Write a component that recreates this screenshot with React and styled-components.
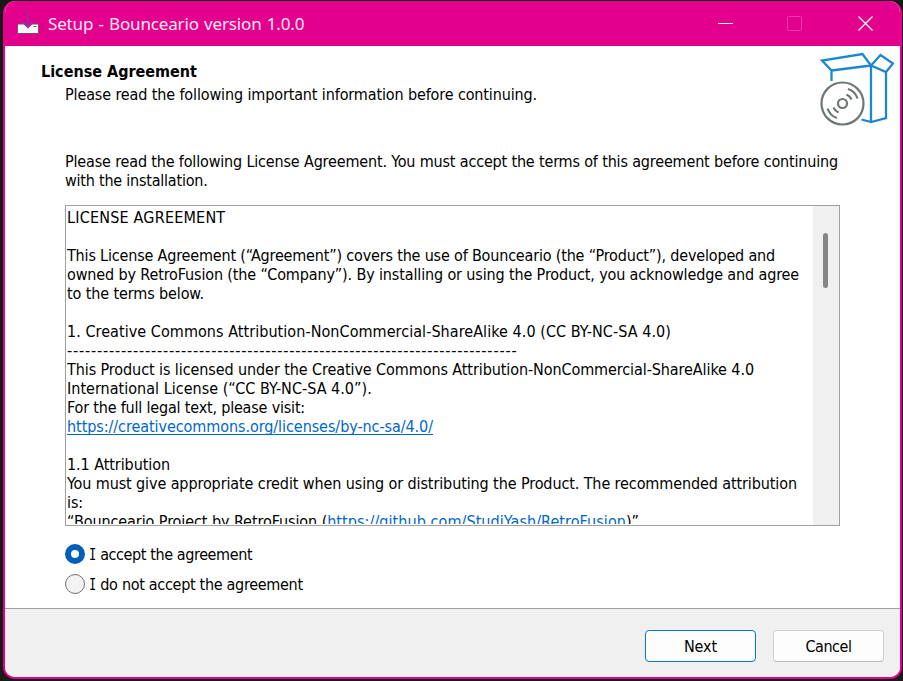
import React from 'react';
import styled, { createGlobalStyle } from 'styled-components';

const GlobalStyle = createGlobalStyle`
  * { box-sizing: border-box; }
  body { margin: 0; background: #191919; overflow: hidden; }
`;

const Desktop = styled.div`
  width: 903px;
  height: 681px;
  padding: 1px 1px 2px 3px;
  background: #191919;
`;

const Window = styled.div`
  height: 678px;
  display: flex;
  flex-direction: column;
  overflow: hidden;
  border: 2px solid #e3008c;
  border-top-width: 0;
  border-radius: 12px;
  background: #fff;
  color: #000;
  font: 16px/19px "DejaVu Sans Condensed", "DejaVu Sans", sans-serif;
`;

const TitleBar = styled.header`
  flex: none;
  height: 45px;
  display: flex;
  align-items: center;
  background: #e3008c;
  color: #fff;
`;

const AppIcon = styled.svg`
  width: 24px;
  height: 25px;
  margin: 0 8px 0 11px;
`;

const Title = styled.h1`
  flex: 1;
  margin: 0;
  font: 400 17px/24px "Noto Sans", "Open Sans", sans-serif;
  letter-spacing: -0.16px;
  word-spacing: 1px;
  color: #ffe9f6;
`;

const WindowControls = styled.div`
  display: flex;
  align-self: stretch;
`;

const ControlButton = styled.button`
  width: 70px;
  padding: 0;
  border: 0;
  background: none;
  display: grid;
  place-items: center;
  color: ${(p) => (p.disabled ? '#ee3aa8' : '#fff')};
`;

const Header = styled.section`
  flex: none;
  height: 104px;
  display: flex;
  justify-content: space-between;
  padding: 16px 6px 0 36px;
`;

const Heading = styled.h2`
  margin: 0 0 4px;
  font-size: 16px;
  line-height: 19px;
  font-weight: 700;
`;

const BoxArt = styled.svg`
  width: 76px;
  height: 76px;
  margin-top: -11px;
`;

const Body = styled.main`
  flex: 1;
  min-height: 0;
  padding: 2px 60px 0 60px;
`;

const Instructions = styled.div`
  height: 53px;
`;

const Line = styled.div`
  height: 19px;
  white-space: pre;
  letter-spacing: ${(p) => p.$track || 0}px;
`;

const Subheading = styled(Line)`
  margin-left: 24px;
`;

const LicenseBox = styled.div`
  height: 321px;
  display: flex;
  border: 1px solid #a0a0a0;
  padding-left: 1px;
  overflow: hidden;
`;

const LicenseText = styled.div`
  flex: 1;
  min-width: 0;
  height: 318px;
  padding-top: 2px;
  overflow: hidden;
`;

const Link = styled.a`
  color: #0066cc;
  text-decoration: underline;
  text-decoration-thickness: 1px;
  text-decoration-skip-ink: none;
  text-underline-offset: 2px;
  letter-spacing: ${(p) => p.$track}px;
`;

const ScrollTrack = styled.div`
  flex: none;
  width: 26px;
  padding: 27px 0 0 10px;
  background: #f0f0f0;
`;

const ScrollThumb = styled.div`
  width: 5px;
  height: 55px;
  border-radius: 2.5px;
  background: #868686;
`;

const RadioGroup = styled.div`
  display: flex;
  flex-direction: column;
  gap: 10px;
  margin-top: 18px;
`;

const RadioRow = styled.label`
  height: 20px;
  display: flex;
  align-items: center;
  gap: 4px;
  white-space: pre;
  letter-spacing: ${(p) => p.$track}px;
`;

const Radio = styled.span`
  width: 20px;
  height: 20px;
  border-radius: 50%;
  border: ${(p) => (p.$checked ? '6px solid #005fb8' : '1px solid #727272')};
  background: ${(p) => (p.$checked ? '#fff' : '#f3f3f3')};
`;

const SerifI = styled.span`
  display: inline-block;
  width: 7px;
  font-family: "DejaVu Sans Mono", monospace;
  transform: scaleX(0.75);
  transform-origin: left;
`;

const Footer = styled.footer`
  flex: none;
  height: 69px;
  display: flex;
  justify-content: flex-end;
  gap: 17px;
  padding: 21px 16px 0 0;
  border-top: 1px solid #a0a0a0;
  background: #f0f0f0;
`;

const Button = styled.button`
  width: 111px;
  height: 32px;
  padding: 0;
  border: 1px solid ${(p) => (p.$primary ? '#0078d4' : '#d0d0d0')};
  border-bottom-color: ${(p) => (p.$primary ? '#0078d4' : '#bababa')};
  border-radius: 4px;
  background: #fdfdfd;
  color: #000;
  font: inherit;
  letter-spacing: ${(p) => p.$track}px;
`;

const license = [
  ['LICENSE AGREEMENT', 0.2],
  [''],
  ['This License Agreement (“Agreement”) covers the use of Bounceario (the “Product”), developed and', -0.177],
  ['owned by RetroFusion (the “Company”). By installing or using the Product, you acknowledge and agree', -0.135],
  ['to the terms below.', -0.11],
  [''],
  ['1. Creative Commons Attribution-NonCommercial-ShareAlike 4.0 (CC BY-NC-SA 4.0)', 0.056],
  ['-'.repeat(75), 0.81],
  ['This Product is licensed under the Creative Commons Attribution-NonCommercial-ShareAlike 4.0', -0.088],
  ['International License (“CC BY-NC-SA 4.0”).', 0.02],
  ['For the full legal text, please visit:', -0.187],
  [<Link $track={-0.066}>https://creativecommons.org/licenses/by-nc-sa/4.0/</Link>],
  [''],
  ['1.1 Attribution', -0.066],
  ['You must give appropriate credit when using or distributing the Product. The recommended attribution', -0.104],
  ['is:', -0.1],
  [<>“Bounceario Project by RetroFusion (<Link $track={0.07}>https://github.com/StudiYash/RetroFusion</Link>)”</>, -0.08],
];

export default function App() {
  return (
    <Desktop>
      <GlobalStyle />
      <Window>
        <TitleBar>
          <AppIcon viewBox="0 0 24 25" fill="none">
            <path d="M1.5 13h21v9.500h-21z" fill="#f8f8f8" stroke="#75506a" />
            <path d="M6.500 12h11l-5.500 5.500z" fill="#e3008c" />
            <path d="M17.500 15.500h3" stroke="#555" />
            <path d="M11.500 1v15" stroke="#76409f" />
            <path d="M6.500 11l5 5 5-5" stroke="#6650a8" strokeWidth="1.200" />
          </AppIcon>
          <Title>Setup - Bounceario version 1.0.0</Title>
          <WindowControls>
            <ControlButton aria-label="Minimize">
              <svg width="16" height="15"><path d="M1 7.500h15" stroke="currentColor" /></svg>
            </ControlButton>
            <ControlButton aria-label="Maximize" disabled>
              <svg width="16" height="15"><rect x=".5" y=".5" width="14" height="14" rx="1" fill="none" stroke="currentColor" /></svg>
            </ControlButton>
            <ControlButton aria-label="Close">
              <svg width="16" height="15"><path d="M1.500 .5l14 14M15.500 .5l-14 14" stroke="currentColor" strokeWidth="1.300" /></svg>
            </ControlButton>
          </WindowControls>
        </TitleBar>
        <Header>
          <div>
            <Heading>License Agreement</Heading>
            <Subheading $track={-0.127}>Please read the following important information before continuing.</Subheading>
          </div>
          <BoxArt viewBox="0 0 76 76" fill="none">
            <g stroke="#1c87d1" strokeWidth="2.300">
              <path d="M13.500 30V19.500L4 9.500l40.500-6.500L53 14.500l-39.500 5" />
              <path d="M53 14.500l9.500-10.500L75 12.500l-7 8.500-15-6.500v56.500l15-4V21M53 71l-9.500-2.500" />
            </g>
            <g stroke="#6f7775" strokeWidth="2.200">
              <circle cx="24.500" cy="52.500" r="21" />
              <circle cx="24.500" cy="52.500" r="4.500" />
              <path d="M28.500 43.500a10 10 0 0 1 5 5M30 38a15 15 0 0 1 9.500 9.500M20.500 61.500a10 10 0 0 1-5-5M19 67a15 15 0 0 1-9.500-9.500" />
            </g>
          </BoxArt>
        </Header>
        <Body>
          <Instructions>
            <Line $track={-0.165}>Please read the following License Agreement. You must accept the terms of this agreement before continuing</Line>
            <Line $track={-0.22}>with the installation.</Line>
          </Instructions>
          <LicenseBox>
            <LicenseText>
              {license.map(([text, track], i) => (
                <Line key={i} $track={track}>{text}</Line>
              ))}
            </LicenseText>
            <ScrollTrack><ScrollThumb /></ScrollTrack>
          </LicenseBox>
          <RadioGroup>
            <RadioRow $track={-0.4}>
              <Radio $checked />
              <span><SerifI>I</SerifI> accept the agreement</span>
            </RadioRow>
            <RadioRow $track={-0.3}>
              <Radio />
              <span><SerifI>I</SerifI> do not accept the agreement</span>
            </RadioRow>
          </RadioGroup>
        </Body>
        <Footer>
          <Button $primary $track={-0.1}>Next</Button>
          <Button $track={-0.45}>Cancel</Button>
        </Footer>
      </Window>
    </Desktop>
  );
}
